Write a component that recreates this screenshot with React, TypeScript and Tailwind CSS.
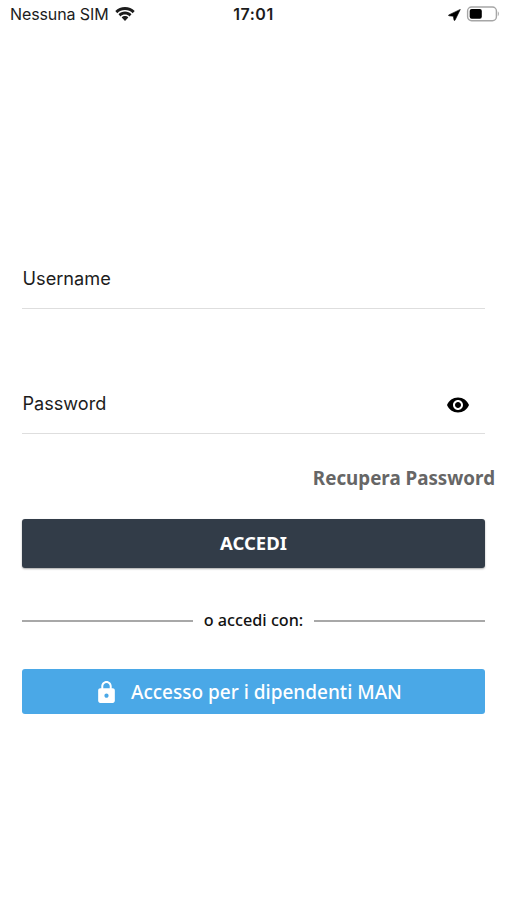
import { useState } from "react"
import { MdLock, MdVisibility } from "react-icons/md"

function WifiIcon() {
  return (
    <svg viewBox="0 0 20 15" className="ml-[6px] h-[15px] w-5" fill="currentColor">
      <path d="M10 0.1C6.3 0.1 2.8 1.6 0.3 4L2.3 6.2C4.3 4.2 7 3.1 10 3.1S15.7 4.2 17.7 6.2L19.7 4C17.2 1.6 13.7 0.1 10 0.1Z" />
      <path d="M10 4.6C7.5 4.6 5.2 5.6 3.5 7.2L5.5 9.4C6.7 8.2 8.2 7.6 10 7.6S13.3 8.2 14.5 9.4L16.5 7.2C14.8 5.6 12.5 4.6 10 4.6Z" />
      <path d="M10 9.1C8.7 9.1 7.5 9.6 6.7 10.5L10 14L13.3 10.5C12.5 9.6 11.3 9.1 10 9.1Z" />
    </svg>
  )
}

function LocationIcon() {
  return (
    <svg viewBox="0 0 13 12" className="mt-px h-3 w-[13px]" fill="currentColor" stroke="currentColor" strokeWidth="0.6">
      <path d="M12.3 0.4L0.8 5.9C0.4 6.2 0.5 6.8 1 6.8L5.3 7.2L6 11.1C6.1 11.6 6.8 11.7 7.1 11.1Z" />
    </svg>
  )
}

function BatteryIcon() {
  return (
    <svg viewBox="0 0 34 16" className="ml-[5px] h-4 w-[34px]">
      <rect x="1.6" y="1" width="28.8" height="13.7" rx="4" fill="none" stroke="#a6a6a6" strokeWidth="1.4" />
      <rect x="3.7" y="3" width="12.1" height="9.7" rx="2" fill="#000" />
      <path d="M31.8 5.6C33.2 6.2 33.2 9.5 31.8 10.1Z" fill="#a6a6a6" />
    </svg>
  )
}

function StatusBar() {
  return (
    <header className="grid h-[28px] grid-cols-3 items-center px-[8px] font-['Inter',sans-serif] text-[#1c1c1c]">
      <div className="flex items-center whitespace-nowrap pl-[2px] text-[16px] leading-[28px]">
        <span className="tracking-[-0.1px]">Nessuna SIM</span>
        <WifiIcon />
      </div>
      <span className="text-center text-[16px] font-semibold leading-[28px] tracking-[0.5px]">17:01</span>
      <div className="-mr-px flex items-center justify-end text-black">
        <LocationIcon />
        <BatteryIcon />
      </div>
    </header>
  )
}

export default function App() {
  const [visible, setVisible] = useState(false)

  return (
    <div className="h-[900px] w-full overflow-hidden bg-white font-['Noto_Sans',sans-serif]">
      <StatusBar />

      <main className="pl-[22px] pr-[22px] pt-[220px]">
        {/* Credentials */}
        <div className="flex h-[61px] items-center border-b border-[#dedede]">
          <input
            type="text"
            placeholder="Username"
            className="mt-[2px] w-full bg-transparent pl-[0.5px] font-['Inter',sans-serif] text-[18.2px] outline-none placeholder:text-[#1c1c1c]"
          />
        </div>
        <div className="mt-[64px] flex h-[61px] items-center border-b border-[#dedede] pr-[15px]">
          <input
            type={visible ? "text" : "password"}
            placeholder="Password"
            className="mt-[2px] min-w-0 flex-1 bg-transparent pl-[0.5px] font-['Inter',sans-serif] text-[18.1px] outline-none placeholder:text-[#1c1c1c]"
          />
          <button type="button" aria-label="Password" onClick={() => setVisible(!visible)} className="mt-[3px]">
            <MdVisibility className="h-[24px] w-[24px] text-black" />
          </button>
        </div>

        <div className="-mr-[10px] mt-[30px] flex justify-end">
          <a href="#" className="text-[18.8px] font-bold leading-7 text-[#666]">
            Recupera Password
          </a>
        </div>

        <button
          type="button"
          className="mt-[27px] flex h-[49px] w-full items-center justify-center rounded-[3px] bg-[#323c48] pb-[2px] text-[18.5px] font-bold text-white shadow-[0_1px_2px_rgba(0,0,0,0.35)]"
        >
          ACCEDI
        </button>

        {/* Alternative sign in */}
        <div className="mt-[41px] flex h-6 items-center gap-[11px]">
          <span className="h-[2px] flex-1 bg-[#a8a8a8]" />
          <span className="pb-px text-[16.2px] font-medium text-[#111]">o accedi con:</span>
          <span className="h-[2px] flex-1 bg-[#a8a8a8]" />
        </div>

        <button
          type="button"
          className="mt-[36px] flex h-[45px] w-full items-center rounded-[3px] bg-[#4aa8e7] pl-[72px] text-[19px] font-medium text-white"
        >
          <MdLock className="mr-[12px] mt-[2px] h-[25px] w-[25px]" />
          <span className="pt-px">Accesso per i dipendenti MAN</span>
        </button>
      </main>
    </div>
  )
}
